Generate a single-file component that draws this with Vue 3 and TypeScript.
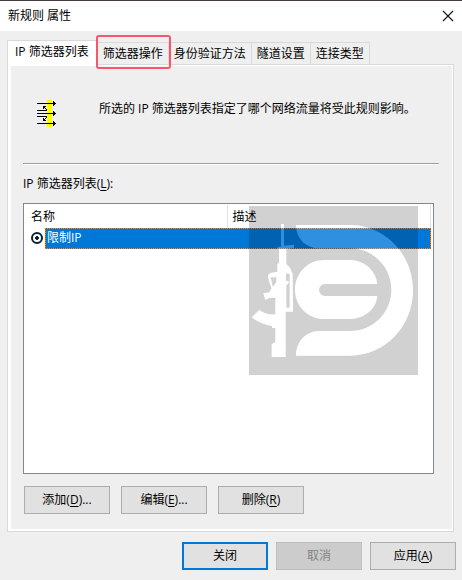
<script setup lang="ts">
import { ref } from 'vue'

const tabs: string[] = ['IP 筛选器列表', '筛选器操作', '身份验证方法', '隧道设置', '连接类型']
const activeTab = ref(0)
const highlighted = 1
const selected = ref('限制IP')

interface Action { text: string; key: string; tail: string }
const actions: Action[] = [
  { text: '添加', key: 'D', tail: '...' },
  { text: '编辑', key: 'E', tail: '...' },
  { text: '删除', key: 'R', tail: '' },
]
</script>

<template>
  <main class="dialog">
    <header class="titlebar">
      <h1>新规则 属性</h1>
      <button class="close" type="button" aria-label="关闭窗口">
        <svg width="10" height="10" viewBox="0 0 10 10"><path d="M0 0L10 10M10 0L0 10" stroke="#111" stroke-width="1.1" /></svg>
      </button>
    </header>

    <div class="body">
      <nav class="tabs" role="tablist">
        <button
          v-for="(tab, i) in tabs"
          :key="tab"
          type="button"
          role="tab"
          class="tab"
          :class="{ active: i === activeTab, marked: i === highlighted }"
          :aria-selected="i === activeTab"
          @click="activeTab = i"
        >{{ tab }}</button>
      </nav>

      <section class="panel">
        <div class="intro">
          <svg class="filter-icon" width="19" height="27" viewBox="0 0 19 27" shape-rendering="crispEdges">
            <path fill="#ff0" d="M10 0h5v27h-5z" />
            <path fill="#000" d="M0 3h19v1H0zM0 13h19v1H0zM0 23h19v1H0zM16 1h1v5h-1zM17 2h1v3h-1zM16 11h1v5h-1zM17 12h1v3h-1zM16 21h1v5h-1zM17 22h1v3h-1zM0 10h10v1H0zM9 9h1v2h-1zM6 6h3v1H6zM6 6h1v3H6zM7 7h1v1H7zM8 8h1v1H8zM0 16h10v1H0zM9 16h1v2h-1zM6 20h3v1H6zM6 18h1v3H6zM7 19h1v1H7zM8 18h1v1H8z" />
          </svg>
          <p>所选的 IP 筛选器列表指定了哪个网络流量将受此规则影响。</p>
        </div>
        <hr />
        <h2 id="list-label">IP 筛选器列表(<u>L</u>):</h2>

        <div class="list">
          <table aria-labelledby="list-label">
            <thead>
              <tr><th class="name">名称</th><th class="desc">描述</th></tr>
            </thead>
            <tbody>
              <tr>
                <td colspan="2">
                  <label class="row">
                    <input v-model="selected" type="radio" name="filter" value="限制IP" />
                    <span>限制IP</span>
                  </label>
                </td>
              </tr>
            </tbody>
          </table>
          <svg class="watermark" viewBox="27 33 507 507" aria-hidden="true">
            <defs>
              <g id="emblem">
                <path d="M168 90H330C435 90 519 178 519 286S435 482 330 482H168C168 440 198 408 238 408H330C400 408 454 352 454 284S400 160 330 160H238C198 160 168 130 168 90Z" />
                <path d="M252 195H328C372 195 408 226 412 267H255A18 18 0 0 0 255 303H412C408 344 372 372 328 372H252C204 372 165 333 165 284S204 195 252 195Z" />
                <path fill-rule="evenodd" d="M123 87H132V152L162 149V158L139 162V207L150 218L158 238L159 350H137V486H95V447L106 442V400L96 398V393C74 391 52 381 35 367L58 345C70 354 86 360 106 358V308H89L76 315L70 295L88 292L95 280C89 266 84 252 84 240L91 234L112 230V207L117 203V162H113V155H123ZM92 247L98 275L109 262V247ZM138 235V258L146 258L145 266L139 270V338H149V237Z" />
              </g>
              <mask id="cutout" maskUnits="userSpaceOnUse" x="27" y="33" width="507" height="507">
                <path fill="#fff" d="M27 33h507v507H27z" />
                <use href="#emblem" fill="#000" />
              </mask>
            </defs>
            <path d="M27 33h507v507H27z" fill="#000" fill-opacity=".18" mask="url(#cutout)" />
            <use href="#emblem" fill="#fff" fill-opacity=".18" />
          </svg>
        </div>

        <div class="actions">
          <button v-for="a in actions" :key="a.key" type="button" class="btn">{{ a.text }}(<u>{{ a.key }}</u>){{ a.tail }}</button>
        </div>
      </section>
    </div>

    <footer class="footer">
      <button type="button" class="btn primary">关闭</button>
      <button type="button" class="btn" disabled>取消</button>
      <button type="button" class="btn">应用(<u>A</u>)</button>
    </footer>
  </main>
</template>

<style>
body { margin: 0; background: #efefef; }
</style>

<style scoped>
.dialog {
  box-sizing: border-box;
  min-height: 100vh;
  border-top: 1px solid #443d40;
  background: #efefef;
  color: #000;
  font: 12px/16px "Open Sans", "Noto Sans CJK SC", sans-serif;
}
.dialog * { box-sizing: border-box; }
button { font: inherit; color: inherit; padding: 0; margin: 0; white-space: nowrap; }
h1, h2, p { margin: 0; font: inherit; }
u { text-decoration: underline; text-underline-offset: 2px; }
.titlebar {
  display: flex;
  align-items: center;
  justify-content: space-between;
  height: 30px;
  padding: 0 3px 0 8px;
  background: #fff;
}
.close {
  display: flex;
  align-items: center;
  justify-content: center;
  width: 22px;
  height: 22px;
  border: 0;
  background: none;
}
.close svg { overflow: visible; }
.body { padding: 9px 8px 0 7px; }
.tabs { display: flex; align-items: flex-end; }
.tab {
  position: relative;
  height: 22px;
  padding: 0 5px;
  border: 1px solid #d9d9d9;
  border-bottom: 0;
  border-left: 0;
  background: #efefef;
}
.tab.active {
  height: 26px;
  margin: 0 0 -2px;
  padding: 0 9px 4px 7px;
  border-left: 1px solid #d9d9d9;
  border-right: 0;
  background: #fff;
  z-index: 1;
}
.tab.marked::after {
  content: "";
  position: absolute;
  inset: -8px -3px -5px -2px;
  border: 2px solid #f5576c;
  border-radius: 3px;
  z-index: 2;
}
.panel {
  border: 1px solid #d9d9d9;
  box-shadow: inset 3px 1px #fff, inset -1px -2px #fff;
  padding: 32px 14px 17px 15px;
}
.intro {
  display: flex;
  align-items: flex-start;
  gap: 43px;
  height: 66px;
  padding: 3px 0 0 14px;
}
.intro p { padding-top: 1px; white-space: nowrap; }
.filter-icon { flex: none; }
hr { margin: 0; border: 0; height: 2px; background: #fff; border-top: 1px solid #a0a0a0; }
h2 { margin: 11px 0; }
.list {
  position: relative;
  height: 271px;
  margin-right: 5px;
  padding: 1px 2px;
  border: 1px solid #828790;
  background: #fff;
}
table { width: 100%; border-collapse: collapse; table-layout: fixed; }
th { height: 23px; padding: 0 5px; border-right: 1px solid #e2e2e2; font-weight: 400; text-align: left; }
th.name { width: 201px; }
td { padding: 0; }
.row { display: flex; align-items: center; }
.row input {
  appearance: none;
  flex: none;
  width: 12px;
  height: 12px;
  margin: 0 2px 1px 5px;
  border: 2px solid #0b2036;
  border-radius: 50%;
  background: radial-gradient(circle, #0b2036 2px, #fff 2px);
}
.row span {
  flex: 1;
  height: 21px;
  padding: 2px;
  background:
    repeating-linear-gradient(90deg, #ff8728 0 1px, #0078d7 1px 2px) top / 100% 1px no-repeat,
    repeating-linear-gradient(90deg, #ff8728 0 1px, #0078d7 1px 2px) bottom / 100% 1px no-repeat,
    repeating-linear-gradient(#ff8728 0 1px, #0078d7 1px 2px) left / 1px 100% no-repeat,
    repeating-linear-gradient(#ff8728 0 1px, #0078d7 1px 2px) right / 1px 100% no-repeat,
    #0078d7;
  color: #fff;
}
.watermark { position: absolute; top: 2px; right: 15px; width: 169px; height: 169px; }
.actions { display: flex; gap: 11px; padding: 12px 0 0 1px; }
.btn {
  width: 86px;
  height: 28px;
  border: 1px solid #adadad;
  background: #e1e1e1;
}
.btn.primary { border: 2px solid #0078d7; }
.btn:disabled { border-color: #bfbfbf; background: #ccc; color: #838383; }
.footer { display: flex; justify-content: flex-end; gap: 8px; padding: 10px 6px 10px 0; }
</style>
